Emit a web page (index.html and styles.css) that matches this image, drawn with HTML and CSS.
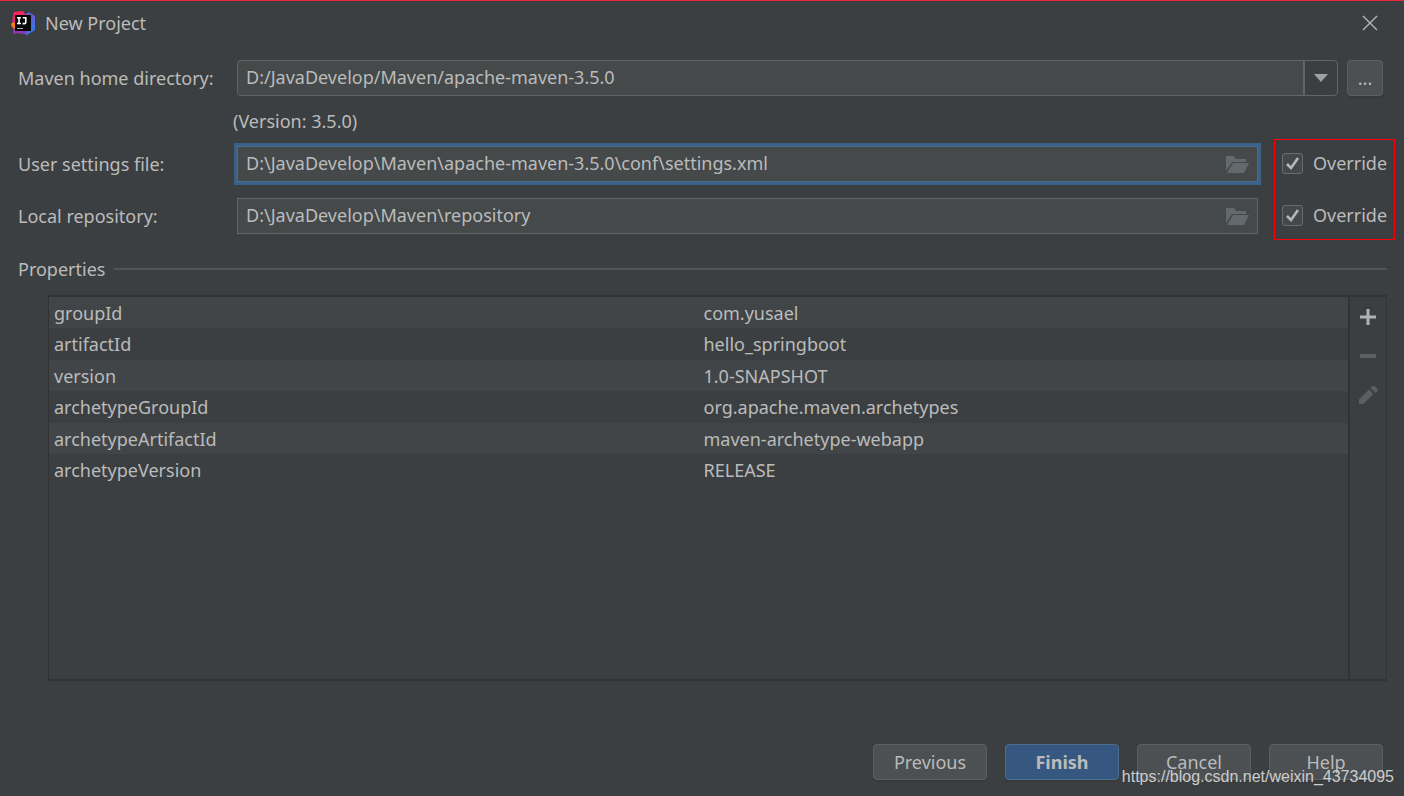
FILE: index.html
```html
<!DOCTYPE html>
<html lang="en">
<head>
<meta charset="utf-8">
<title>New Project</title>
<link rel="stylesheet" href="styles.css">
</head>
<body>
<main class="dialog">
  <header class="titlebar">
    <svg class="logo" width="24" height="24" viewBox="0 0 24 24" aria-hidden="true">
      <defs>
        <linearGradient id="blue" x1="0" y1="0" x2="1" y2="1"><stop offset="0" stop-color="#3b62e0"/><stop offset=".5" stop-color="#6a58d4"/><stop offset="1" stop-color="#1687f5"/></linearGradient>
        <linearGradient id="pink" x1="0" y1="0" x2="0" y2="1"><stop offset="0" stop-color="#ff2857"/><stop offset="1" stop-color="#d31f82"/></linearGradient>
      </defs>
      <path fill="url(#blue)" d="M13 4 18 1l6 4v14l-8 5-6-3z"/>
      <path fill="#9135b5" d="M2 18 6 12l10 9-3 2-6-1-5 1z"/>
      <path fill="#f87c17" d="M0 13 4 9v9l-3-2z"/>
      <path fill="url(#pink)" d="M3 1 12 0l4 6-10 8-5-4z"/>
      <path fill="#080808" d="M4 4h16v16H4z"/>
      <path fill="none" stroke="#fff" stroke-width="1.6" d="M6 6.8h4M8 6.8v6M6 12.5h4M11.800 6.800h3v4.400q0 1.400-1.400 1.400h-1.800"/>
      <path fill="#aaa" d="M6 17h6v1H6z"/>
    </svg>
    <h1 class="title">New Project</h1>
    <button class="close" type="button" aria-label="Close">
      <svg width="16" height="16" viewBox="0 0 16 16"><path d="M1 1 15 15M15 1 1 15" fill="none" stroke="#b4b6b7" stroke-width="1.4"/></svg>
    </button>
  </header>

  <form class="form">
    <div class="home-row">
      <label class="label" for="home">Maven home directory:</label>
      <div class="combo">
        <select id="home" class="combo-select"><option>D:/JavaDevelop/Maven/apache-maven-3.5.0</option></select>
        <svg class="combo-arrow" width="14" height="8" viewBox="0 0 14 8" aria-hidden="true"><path d="M0 0h14L7 8z" fill="#9da1a4"/></svg>
      </div>
      <button class="button browse" type="button">...</button>
    </div>
    <p class="version">(Version: 3.5.0)</p>

    <div class="paths">
      <div class="path-rows">
        <div class="path-row">
          <label class="label" for="settings">User settings file:</label>
          <div class="field field-focused">
            <input id="settings" class="field-input" type="text" value="D:\JavaDevelop\Maven\apache-maven-3.5.0\conf\settings.xml">
            <button class="folder" type="button" aria-label="Browse settings file"><svg width="23" height="17" viewBox="0 0 23 17"><path fill="#636a6e" d="M0 0h8l2 3h10v3H6L0 15zM7 7h16l-5 10H1z"/></svg></button>
          </div>
        </div>
        <div class="path-row">
          <label class="label" for="repo">Local repository:</label>
          <div class="field">
            <input id="repo" class="field-input" type="text" value="D:\JavaDevelop\Maven\repository">
            <button class="folder" type="button" aria-label="Browse repository"><svg width="23" height="17" viewBox="0 0 23 17"><path fill="#636a6e" d="M0 0h8l2 3h10v3H6L0 15zM7 7h16l-5 10H1z"/></svg></button>
          </div>
        </div>
      </div>
      <div class="overrides">
        <label class="override">
          <span class="check"><input class="check-box" type="checkbox" checked><svg class="check-mark" width="15" height="15" viewBox="0 0 15 15"><path d="M2 8 6 12 13 2" fill="none" stroke="#b4b6b7" stroke-width="2.6"/></svg></span>
          Override
        </label>
        <label class="override">
          <span class="check"><input class="check-box" type="checkbox" checked><svg class="check-mark" width="15" height="15" viewBox="0 0 15 15"><path d="M2 8 6 12 13 2" fill="none" stroke="#b4b6b7" stroke-width="2.6"/></svg></span>
          Override
        </label>
      </div>
    </div>
  </form>

  <h2 class="section-title">Properties</h2>
  <section class="panel">
    <div class="table-area">
      <table class="properties">
        <tbody>
          <tr><td>groupId</td><td>com.yusael</td></tr>
          <tr><td>artifactId</td><td>hello_springboot</td></tr>
          <tr><td>version</td><td>1.0-SNAPSHOT</td></tr>
          <tr><td>archetypeGroupId</td><td>org.apache.maven.archetypes</td></tr>
          <tr><td>archetypeArtifactId</td><td>maven-archetype-webapp</td></tr>
          <tr><td>archetypeVersion</td><td>RELEASE</td></tr>
        </tbody>
      </table>
    </div>
    <div class="tools">
      <button class="tool" type="button" aria-label="Add"><svg width="20" height="20" viewBox="0 0 20 20"><path fill="#afb1b3" d="M8.500 2h3v6.500H18v3h-6.500V18h-3v-6.500H2v-3h6.500z"/></svg></button>
      <button class="tool" type="button" aria-label="Remove" disabled><svg width="20" height="20" viewBox="0 0 20 20"><path fill="#5c5e5f" d="M2 8h16v4H2z"/></svg></button>
      <button class="tool" type="button" aria-label="Edit" disabled><svg width="20" height="20" viewBox="0 0 20 20"><path fill="#5c5e5f" d="M1 14.500 11 4.500l4.500 4.500L5.500 19H1zM12.500 3l1.500-1.500q1.500-1.500 3 0l2 2q1.500 1.500 0 3L17.500 8z"/></svg></button>
    </div>
  </section>

  <footer class="actions">
    <button class="button" type="button">Previous</button>
    <button class="button button-primary" type="submit">Finish</button>
    <button class="button" type="button">Cancel</button>
    <button class="button" type="button">Help</button>
  </footer>
  <span class="watermark">https://blog.csdn.net/weixin_43734095</span>
</main>
</body>
</html>
```
FILE: styles.css
```css
* { box-sizing: border-box; }
body {
  margin: 0;
  background: #3c3f41;
  color: #bbbbbb;
  font: 18px/24px "Noto Sans", "Open Sans", sans-serif;
}
button, input, select { font: inherit; color: inherit; }
button { padding: 0; border: 0; background: none; }
svg { display: block; }

.dialog {
  position: relative;
  display: flex;
  flex-direction: column;
  min-height: 100vh;
  border-top: 1px solid #e8273a;
}
.titlebar {
  display: flex;
  align-items: center;
  gap: 10px;
  height: 44px;
  padding: 0 26px 0 11px;
}
.title { flex: 1; margin: 0; font-size: 18px; font-weight: 400; }

.form { padding: 15px 9px 0 18px; }
.home-row { display: flex; align-items: center; padding-right: 12px; }
.label { flex: none; width: 219px; }
.combo {
  display: grid;
  flex: 1;
  grid-template-columns: 1fr 33px;
  height: 36px;
  border: 1px solid #646464;
  border-radius: 4px;
  background: linear-gradient(#646464, #646464) right 32px top / 2px 100% no-repeat, linear-gradient(90deg, #45494a calc(100% - 32px), #3c3f41 0);
}
.combo-select {
  grid-area: 1 / 1 / 2 / 3;
  appearance: none;
  min-width: 0;
  padding: 0 8px 2px;
  border: 0;
  background: none;
  outline: 0;
}
.combo-arrow { grid-area: 1 / 2; place-self: center; pointer-events: none; }
.version { margin: 13px 0 6px 215px; }

.button {
  width: 114px;
  height: 36px;
  border: 1px solid #5e6060;
  border-radius: 4px;
  background: #4c5052;
  box-shadow: 0 2px 1px #37393b;
}
.button-primary { border-color: #4c708c; background: #365880; font-weight: 700; }
.browse { flex: none; width: 36px; margin-left: 9px; }

.paths { display: flex; gap: 16px; }
.path-rows { display: grid; flex: 1; gap: 16px; padding: 7px 0 6px; }
.path-row { display: flex; align-items: center; }
.field {
  display: flex;
  flex: 1;
  align-items: center;
  height: 36px;
  padding-right: 8px;
  border: 1px solid #646464;
  background: #45494a;
}
.field-focused { border-color: #466d94; box-shadow: 0 0 0 3px #3d6185; }
.field-input {
  flex: 1;
  min-width: 0;
  height: 100%;
  padding: 0 8px 2px;
  border: 0;
  background: none;
  outline: 0;
}
.overrides {
  display: grid;
  flex: none;
  gap: 16px;
  width: 121px;
  padding: 5px 0 6px 7px;
  border: 1px solid #fb0006;
}
.override { display: flex; align-items: center; gap: 10px; }
.check { display: grid; place-items: center; }
.check-box {
  grid-area: 1 / 1;
  appearance: none;
  width: 21px;
  height: 21px;
  margin: 0;
  border: 1px solid #6b6b6b;
  border-radius: 3px;
  background: #43494a;
}
.check-mark { grid-area: 1 / 1; pointer-events: none; visibility: hidden; }
.check-box:checked + .check-mark { visibility: visible; }

.section-title {
  display: flex;
  align-items: center;
  gap: 9px;
  margin: 17px 17px 14px 18px;
  font-size: 18px;
  font-weight: 400;
}
.section-title::after { content: ""; flex: 1; height: 2px; background: #515355; }

.panel {
  display: flex;
  flex: 1;
  margin: 0 17px 0 48px;
  border: solid #323232;
  border-width: 2px 1px;
}
.table-area { flex: 1; border-right: 2px solid #323232; }
.properties { width: 100%; table-layout: fixed; border-collapse: collapse; }
.properties tr { height: 32px; }
.properties tr:nth-child(odd) { height: 31px; background: #414547; }
.properties td { padding: 0 5px; }
.tools { display: flex; flex-direction: column; gap: 19px; padding: 10px 8px; }

.actions { display: flex; justify-content: flex-end; gap: 18px; padding: 63px 21px 16px; }
.watermark {
  position: absolute;
  right: 10px;
  bottom: 8px;
  color: #cccccc;
  font: 16px/22px "Liberation Sans", sans-serif;
}
```
